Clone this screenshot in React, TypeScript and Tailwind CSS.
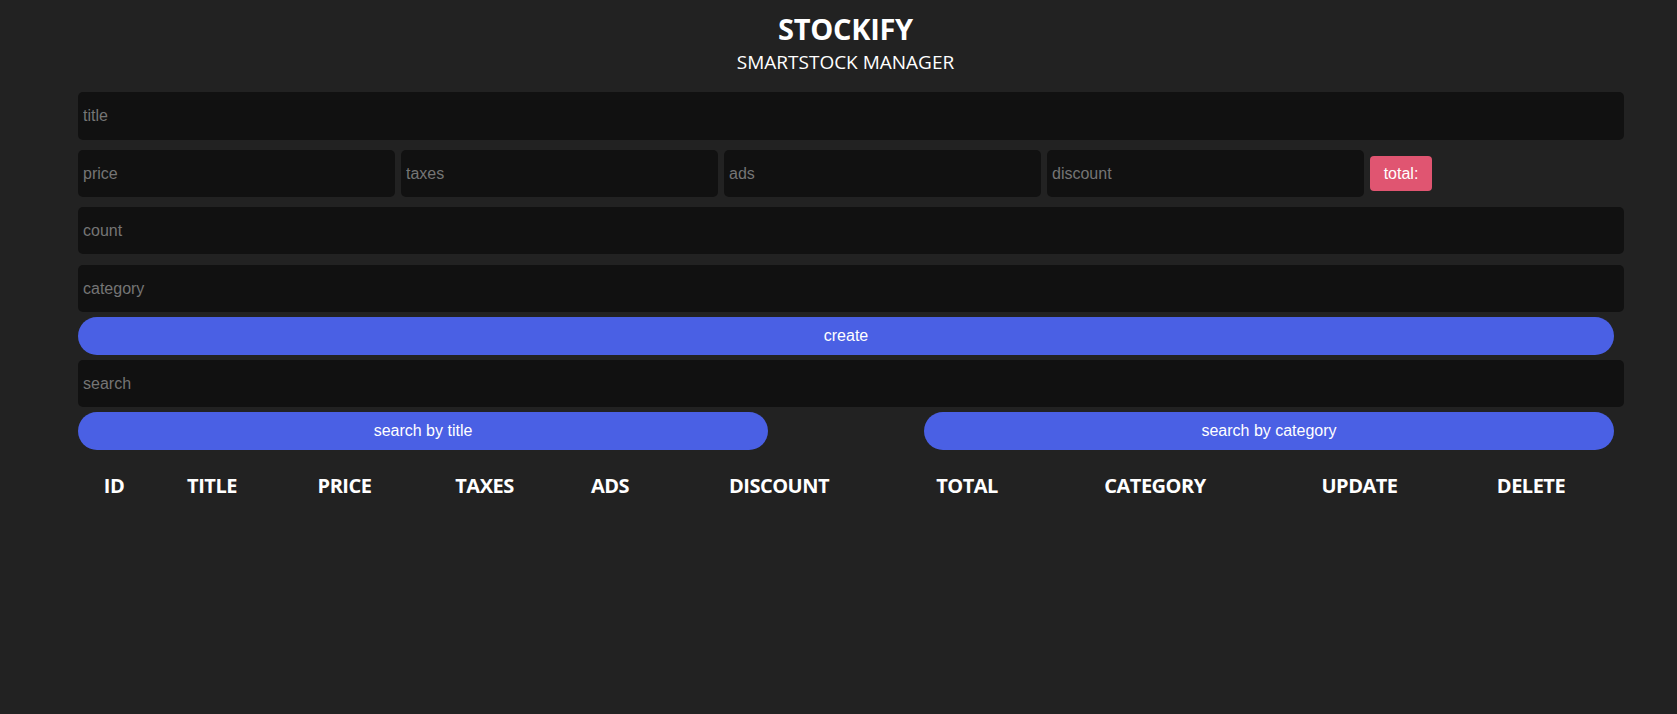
import React from 'react';

const inputCls =
  'rounded-[5px] bg-[#111111] px-[5px] text-base text-white placeholder:text-[#757575] outline-none font-["Liberation_Sans",Arial,sans-serif]';

const btnCls =
  'h-[38px] rounded-full bg-[#4a60e4] text-base text-white font-["Liberation_Sans",Arial,sans-serif]';

const columns = ['ID', 'TITLE', 'PRICE', 'TAXES', 'ADS', 'DISCOUNT', 'TOTAL', 'CATEGORY', 'UPDATE', 'DELETE'];

export default function App() {
  return (
    <div className="min-h-screen bg-[#222222] text-white">
      {/* Header */}
      <div className="ml-[14px] pt-[8px] text-center font-['Open_Sans','Noto_Sans',sans-serif]">
        <h1 className="text-[29px] font-bold leading-[42px] tracking-[-0.3px]">STOCKIFY</h1>
        <p className="text-[19px] leading-[24px]">SMARTSTOCK MANAGER</p>
      </div>

      <div className="ml-[78px] mt-[18px] w-[1536px]">
        <input className={`${inputCls} h-12 w-[1546px]`} placeholder="title" />
        <div className="mt-[10px] flex items-center gap-[6px]">
          <input className={`${inputCls} h-[47px] w-[317px]`} placeholder="price" />
          <input className={`${inputCls} h-[47px] w-[317px]`} placeholder="taxes" />
          <input className={`${inputCls} h-[47px] w-[317px]`} placeholder="ads" />
          <input className={`${inputCls} h-[47px] w-[317px]`} placeholder="discount" />
          <span className="flex h-[35px] w-[62px] items-center justify-center rounded-[4px] bg-[#e05571] text-base font-['Liberation_Sans',Arial,sans-serif]">
            total:
          </span>
        </div>
        <input className={`${inputCls} mt-[10px] h-[47px] w-[1546px]`} placeholder="count" />
        <input className={`${inputCls} mt-[11px] h-[47px] w-[1546px]`} placeholder="category" />

        <button className={`${btnCls} mt-[5px] w-full`}>create</button>
        <input className={`${inputCls} mt-[5px] h-[47px] w-[1546px]`} placeholder="search" />

        <div className="mt-[5px] flex justify-between">
          <button className={`${btnCls} w-[690px]`}>search by title</button>
          <button className={`${btnCls} w-[690px]`}>search by category</button>
        </div>

        {/* Table header */}
        <div className="mt-[22px] grid grid-cols-[72px_124px_141px_139px_112px_226px_150px_226px_183px_160px] font-['Open_Sans','Noto_Sans',sans-serif]">
          {columns.map((c) => (
            <div key={c} className="text-center text-[20px] font-bold leading-[28px] tracking-[-0.5px]">
              {c}
            </div>
          ))}
        </div>
      </div>
    </div>
  );
}
